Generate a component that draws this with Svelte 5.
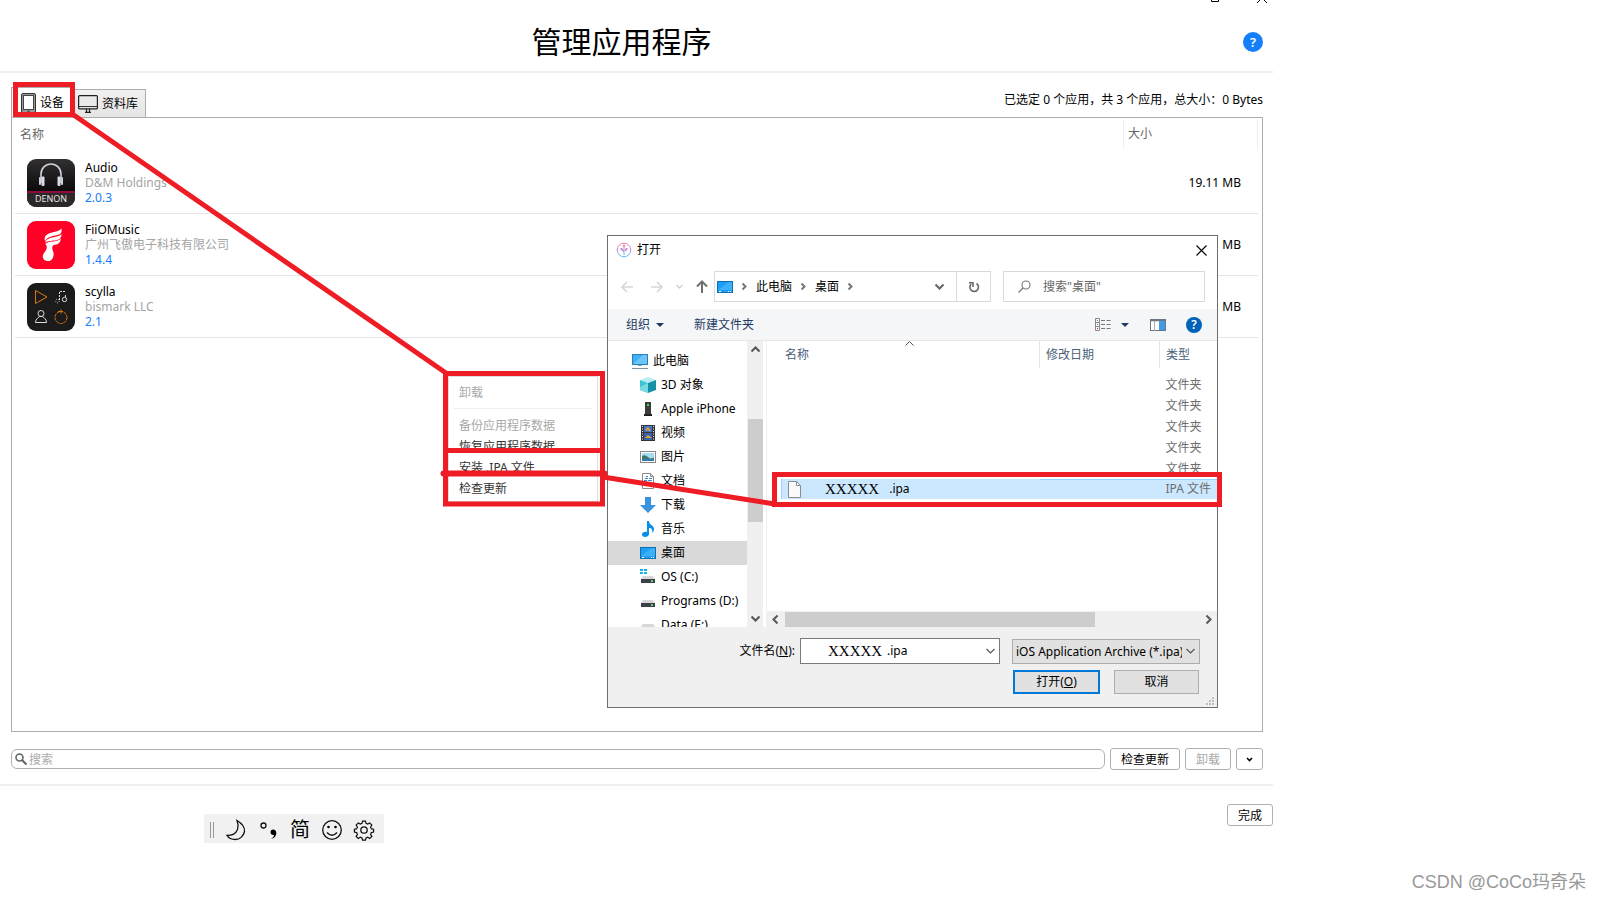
<script>
  const apps = [
    { id: 'denon', name: 'Audio', vendor: 'D&M Holdings', version: '2.0.3', size: '19.11 MB' },
    { id: 'fiio', name: 'FiiOMusic', vendor: '广州飞傲电子科技有限公司', version: '1.4.4', size: 'MB' },
    { id: 'scylla', name: 'scylla', vendor: 'bismark LLC', version: '2.1', size: 'MB' }
  ];
  const tree = [
    { icon: 'pc', label: '此电脑', root: true },
    { icon: 'cube', label: '3D 对象' },
    { icon: 'phone', label: 'Apple iPhone' },
    { icon: 'video', label: '视频' },
    { icon: 'picture', label: '图片' },
    { icon: 'doc', label: '文档' },
    { icon: 'down', label: '下载' },
    { icon: 'music', label: '音乐' },
    { icon: 'desktop', label: '桌面', selected: true },
    { icon: 'osdisk', label: 'OS (C:)' },
    { icon: 'disk', label: 'Programs (D:)' },
    { icon: 'disk', label: 'Data (E:)' }
  ];
  const folders = [1, 2, 3, 4, 5];
  let query = $state('');
  let fileName = $state('XXXXX');
</script>

{#snippet treeIcon(kind)}
  <svg class="i16" viewBox="0 0 16 16" aria-hidden="true">
    {#if kind === 'pc'}
      <rect x=".5" y="1.5" width="15" height="10" fill="#3fb0f5" stroke="#2b7db5" />
      <path d="M1 11 11 2h4v9z" fill="#6cc6fa" />
      <path d="M6 12h4v1H6z" fill="#8aa" /><path d="M0 15.500h16" stroke="#7d93a3" />
    {:else if kind === 'cube'}
      <path d="M8 0 16 3 8 6 0 3z" fill="#b5eef2" /><path d="M0 3l8 3v10l-8-3z" fill="#3cc3d1" /><path d="M16 3 8 6v10l8-3z" fill="#1590a6" /><path d="M0 10l8-4v10l-8-3z" fill="#76dbe3" />
    {:else if kind === 'phone'}
      <path d="M5 1h6v12H5z" fill="#3c3c3c" /><path d="M4 13h8v2H4z" fill="#222" /><rect x="7" y="3" width="2" height="2" fill="#3be04a" />
    {:else if kind === 'video'}
      <path d="M1 0h14v16H1z" fill="#33363b" /><path d="M2.500 1v15M13.500 1v15" stroke="#e6e6e6" stroke-dasharray="1 1.500" /><path d="M4 1h8v6H4z" fill="#4a74c9" /><path d="M4 8h8v7H4z" fill="#3b62ad" /><path d="M5 5l3-3 3 4zM5 13l3-3 4 3z" fill="#e0a52d" />
    {:else if kind === 'picture'}
      <rect x=".5" y="2.500" width="15" height="11" fill="#fff" stroke="#8a8a8a" /><path d="M2 4h12v8H2z" fill="#a8d9f5" /><path d="M2 7q3-2 6 1t6 0v4H2z" fill="#3b7a68" /><path d="M2 10h12v2H2z" fill="#3779ad" />
    {:else if kind === 'doc'}
      <path d="M2.500.5h8l3 3v12h-11z" fill="#fff" stroke="#8a8a8a" /><path d="M10.500.5v3h3" fill="none" stroke="#8a8a8a" /><path d="M6 3.500h2M5 5.500h3M9 5.500h3M4 7.500h3M8 7.500h4M4 9.500h8M4 11.500h8" stroke="#2a8ad4" />
    {:else if kind === 'down'}
      <path d="M5 0h6v8h5l-8 8-8-8h5z" fill="#3a93df" />
    {:else if kind === 'music'}
      <path d="M7 0h2c0 4 5 4 5 8 0 2-1 3-2 4 1-4-1-5-3-5v6c0 2-2 3-4 3s-3-1-3-2.500S4 10 7 11z" fill="#0a8fe8" />
    {:else if kind === 'desktop'}
      <rect x=".5" y="2.500" width="15" height="11" fill="#1e9ff5" stroke="#0f6fb3" /><path d="M1 11 12 3h3v8z" fill="#3db0fa" /><path d="M2 12.500h2M11 12.500h1M13 12.500h1" stroke="#fff" />
    {:else}
      {#if kind === 'osdisk'}<path d="M0 0h3v2H0zM4 0h3v2H4zM0 3h3v2H0zM4 3h3v2H4z" fill="#17b2e8" />{/if}
      <path d="M3 7h10l2 3H1z" fill="#d5d7da" /><path d="M1 10h14v4H1z" fill="#3d4147" /><rect x="11" y="11" width="2" height="2" fill="#49e05a" />
    {/if}
  </svg>
{/snippet}

{#snippet chevron(d, color)}
  <svg class="chev" viewBox="0 0 9 9" aria-hidden="true"><path {d} fill="none" stroke={color} stroke-width="2" /></svg>
{/snippet}

<div class="page">
  <main class="window">
    <header>
      <h1>管理应用程序</h1>
      <button class="help" aria-label="?">?</button>
      <svg class="caption" viewBox="0 0 56 3" aria-hidden="true"><path d="M.5 0v1.500h7V0M46 3l4-4M56 3l-4-4" fill="none" stroke="#000" /></svg>
    </header>

    <section class="body">
      <div class="tabline">
        <div class="tabs" role="tablist">
          <button class="tab active" role="tab" aria-selected="true">
            <svg width="15" height="20" viewBox="0 0 15 20" aria-hidden="true"><rect x=".5" y=".5" width="14" height="19" rx="1.500" fill="#999" stroke="#333" /><rect x="2.500" y="2.500" width="10" height="14" fill="#fff" stroke="#444" /><path d="M6.500 18.200h2" stroke="#222" /></svg>
            设备
          </button>
          <button class="tab" role="tab" aria-selected="false">
            <svg width="20" height="18" viewBox="0 0 20 18" aria-hidden="true"><rect x=".6" y=".6" width="18.800" height="13.300" rx="1" fill="#e9e9e9" stroke="#222" stroke-width="1.200" /><path d="M1 11.500h18" stroke="#333" /><path d="M8.500 14v3M11.500 14v3M7 17.300h6" stroke="#222" stroke-width="1.200" /></svg>
            资料库
          </button>
        </div>
        <p>已选定 0 个应用，共 3 个应用，总大小：0 Bytes</p>
      </div>

      <div class="panel">
        <table class="apps">
          <thead><tr><th>名称</th><th class="size"><span>大小</span></th></tr></thead>
          <tbody>
            {#each apps as app}
              <tr>
                <td>
                  <div class="app">
                    <svg class="appicon" viewBox="0 0 48 48" aria-hidden="true">
                      {#if app.id === 'denon'}
                        <defs><linearGradient id="dk" x1="0" y1="0" x2="0" y2="1"><stop offset="0" stop-color="#322f31" /><stop offset=".65" stop-color="#0d0b0c" /><stop offset="1" stop-color="#2a2426" /></linearGradient></defs>
                        <rect width="48" height="48" rx="9" fill="url(#dk)" />
                        <path d="M0 34h48v5a9 9 0 0 1-9 9H9a9 9 0 0 1-9-9z" fill="#2c2729" />
                        <path d="M0 32h48v2H0z" fill="#8e0b3f" />
                        <path d="M14 24V15a10 10 0 0 1 20 0v9" fill="none" stroke="#cfd0de" stroke-width="1.600" />
                        <rect x="12" y="18" width="2" height="8" rx="1" fill="#cfd0de" /><rect x="14.500" y="17.500" width="3" height="9.500" rx="1" fill="#dcdce8" />
                        <rect x="34" y="18" width="2" height="8" rx="1" fill="#cfd0de" /><rect x="30.500" y="17.500" width="3" height="9.500" rx="1" fill="#dcdce8" />
                        <text x="24" y="43" text-anchor="middle" class="denon">DENON</text>
                      {:else if app.id === 'fiio'}
                        <rect width="48" height="48" rx="9" fill="#ff0027" />
                        <path d="M18 20c-2-6 4-8 9-9 3-.6 6-1.600 7.500-3.500.6 4-.5 5.500-4 6.500-5 1-10.500 2-12.500 6z" fill="#fff" />
                        <path d="M18 21.500c2-5 8-5 12-6 2-.6 3.500-1.500 4.500-2.500 0 4-2 5.500-5 6.200-4 .7-9 .3-11.500 2.300z" fill="#fff" />
                        <path d="M18.300 23c3-3 7-2 11-3 2-.4 3.700-1.500 4.400-2.500 0 4-2.700 6-5.700 6.300-2 .3-3 1-2.700 4l1.200 4c.6 4-1.500 8-5 8.200-3.500.2-6-2-5.700-5 .3-3 3-4.500 3.700-7 .6-2 .2-3.500-1.200-5z" fill="#fff" />
                      {:else}
                        <rect width="48" height="48" rx="9" fill="#1b1b1b" />
                        <path d="M8.500 7.500 20 14 8.500 20.500z" fill="none" stroke="#d8780f" />
                        <path d="M32.500 17V8.500h6M38.500 12v3" fill="none" stroke="#ddd" stroke-dasharray="2 1" /><circle cx="30.500" cy="18" r="1.800" fill="none" stroke="#ddd" stroke-width=".8" stroke-dasharray="1 1" /><circle cx="37.500" cy="16.500" r="2.200" fill="none" stroke="#ddd" />
                        <circle cx="14" cy="30.500" r="3" fill="none" stroke="#ddd" /><path d="M8.500 39.500c0-3 2-4.500 4-6h3c2 1.500 4 3 4 6z" fill="none" stroke="#ddd" />
                        <circle cx="34" cy="34.500" r="6" fill="none" stroke="#d8780f" stroke-dasharray="3 .8" /><path d="M34 26.500v4M31 28.500h5" stroke="#d8780f" />
                      {/if}
                    </svg>
                    <div class="meta"><strong>{app.name}</strong><span>{app.vendor}</span><a href="#{app.id}">{app.version}</a></div>
                  </div>
                </td>
                <td class="size">{app.size}</td>
              </tr>
            {/each}
          </tbody>
        </table>
      </div>

      <div class="actions">
        <label class="search">
          <svg width="12" height="12" viewBox="0 0 12 12" aria-hidden="true"><circle cx="4.500" cy="4.500" r="3.500" fill="none" stroke="#666" stroke-width="1.600" /><path d="m7 7 4.500 4.500" stroke="#666" stroke-width="2.200" /></svg>
          <input type="text" aria-label="搜索" placeholder="搜索" bind:value={query} />
        </label>
        <button class="btn wide">检查更新</button>
        <button class="btn" disabled>卸载</button>
        <button class="btn more" aria-label="更多"><svg width="7" height="5" viewBox="0 0 7 5" aria-hidden="true"><path d="M1 1l2.500 2.500L6 1" fill="none" stroke="#000" stroke-width="1.600" /></svg></button>
      </div>
    </section>

    <footer><button class="btn">完成</button></footer>
  </main>

  <menu class="context">
    <li><button disabled>卸载</button></li>
    <li class="rule"></li>
    <li><button disabled>备份应用程序数据</button></li>
    <li><button>恢复应用程序数据</button></li>
    <li><button>安装 .IPA 文件</button></li>
    <li><button>检查更新</button></li>
  </menu>

  <div class="dialog" role="dialog" aria-labelledby="dlg-title">
    <div class="titlebar">
      <svg width="16" height="16" viewBox="0 0 16 16" aria-hidden="true">
        <defs><linearGradient id="ring" x1="0" y1="0" x2="0" y2="1"><stop offset="0" stop-color="#f57f9b" /><stop offset=".55" stop-color="#b78be0" /><stop offset="1" stop-color="#52c3f2" /></linearGradient></defs>
        <circle cx="8" cy="8" r="6.800" fill="#fff" stroke="url(#ring)" /><path d="M7.500 4h1v9h-1zM4.500 6h2v1.500l1.500 1v1.500L4.500 8zM11.500 6h-2v1.500L8 8.500V10l3.500-2zM6 4.500 8 2.500l2 2z" fill="url(#ring)" />
      </svg>
      <span id="dlg-title">打开</span>
      <button class="bare close" aria-label="关闭"><svg width="11" height="11" viewBox="0 0 11 11"><path d="m.5.5 10 10M10.500.5l-10 10" stroke="#000" stroke-width="1.100" /></svg></button>
    </div>

    <div class="nav">
      <div class="arrows">
        <button class="bare" aria-label="后退"><svg width="12" height="12" viewBox="0 0 12 12"><path d="M12 6H1M6 1 1 6l5 5" fill="none" stroke="#d6d6d6" stroke-width="1.600" /></svg></button>
        <button class="bare" aria-label="前进"><svg width="12" height="12" viewBox="0 0 12 12"><path d="M0 6h11M6 1l5 5-5 5" fill="none" stroke="#d6d6d6" stroke-width="1.600" /></svg></button>
        <button class="bare small" aria-label="最近"><svg width="7" height="5" viewBox="0 0 7 5"><path d="M.5 1l3 3 3-3" fill="none" stroke="#d0d0d0" stroke-width="1.300" /></svg></button>
        <button class="bare" aria-label="上移"><svg width="12" height="13" viewBox="0 0 12 13"><path d="M6 13V2M1 6.500 6 1.500l5 5" fill="none" stroke="#6f6f6f" stroke-width="2" /></svg></button>
      </div>
      <div class="address">
        <div class="crumbs">
          {@render treeIcon('desktop')}
          {@render chevron('M2.500 1.500l3 3-3 3', '#777')}
          <a href="#pc">此电脑</a>
          {@render chevron('M2.500 1.500l3 3-3 3', '#777')}
          <a href="#desktop">桌面</a>
          {@render chevron('M2.500 1.500l3 3-3 3', '#777')}
          <span class="push">{@render chevron('M.5 2.500l4 4 4-4', '#666')}</span>
        </div>
        <button class="bare refresh" aria-label="刷新"><svg width="12" height="12" viewBox="0 0 12 12"><path d="M8.500 2.500A4.300 4.300 0 1 1 3.200 3" fill="none" stroke="#666" stroke-width="1.600" /><path d="M1 1.800H5V6" fill="none" stroke="#666" stroke-width="1.500" /></svg></button>
      </div>
      <label class="find">
        <svg width="13" height="13" viewBox="0 0 13 13" aria-hidden="true"><circle cx="8" cy="5" r="4" fill="none" stroke="#777" stroke-width="1.100" /><path d="M5 8 .5 12.500" stroke="#777" stroke-width="1.200" /></svg>
        <input type="text" placeholder={'搜索"桌面"'} aria-label="搜索桌面" />
      </label>
    </div>

    <div class="toolbar">
      <button class="bare">组织 <svg width="8" height="4" viewBox="0 0 8 4"><path d="M0 0h8L4 4z" fill="#1d3a63" /></svg></button>
      <button class="bare">新建文件夹</button>
      <div class="views">
        <button class="bare" aria-label="视图"><svg width="16" height="13" viewBox="0 0 16 13"><path d="M.5.5h4v12h-4zM.5 4.500h4M.5 8.500h4" fill="none" stroke="#888" /><path d="M6 2.500h4M11.500 2.500h4M6 6.500h4M11.500 6.500h4M6 10.500h4M11.500 10.500h4" stroke="#777" /><path d="M2 2h1v1H2zM2 6h1v1H2z" fill="#3a7" /><path d="M2 10h1v1H2z" fill="#c33" /></svg></button>
        <button class="bare" aria-label="更改视图"><svg width="8" height="4" viewBox="0 0 8 4"><path d="M0 0h8L4 4z" fill="#1d3a63" /></svg></button>
        <button class="bare pane" aria-label="预览"><svg width="16" height="12" viewBox="0 0 16 12"><rect x=".5" y=".5" width="15" height="11" fill="#fff" stroke="#6c7683" /><path d="M1 1.500h14" stroke="#6c7683" stroke-width="1.500" /><path d="M4.500 2v10" stroke="#aab" /><path d="M9 2h6v9H9z" fill="#3f9be8" /></svg></button>
        <button class="help dark" aria-label="?">?</button>
      </div>
    </div>

    <div class="content">
      <ul class="tree">
        {#each tree as node}
          <li class:root={node.root} class:selected={node.selected}>{@render treeIcon(node.icon)}<span>{node.label}</span></li>
        {/each}
      </ul>
      <div class="vscroll">
        {@render chevron('M.5 6.500l4-4 4 4', '#555')}
        <i></i>
        {@render chevron('M.5 2.500l4 4 4-4', '#555')}
      </div>
      <div class="listing">
        <svg class="sort" width="9" height="5" viewBox="0 0 9 5" aria-hidden="true"><path d="M.5 4.500l4-4 4 4" fill="none" stroke="#555" /></svg>
        <table class="files">
          <thead><tr><th>名称</th><th class="date">修改日期</th><th class="type">类型</th></tr></thead>
          <tbody>
            {#each folders as f (f)}
              <tr><td></td><td></td><td>文件夹</td></tr>
            {/each}
            <tr class="selected">
              <td><div class="file"><svg width="13" height="17" viewBox="0 0 13 17" aria-hidden="true"><path d="M.5.5h8l4 4v12H.5z" fill="#fbfbfb" stroke="#8c8c8c" /><path d="M8.500.5v4h4" fill="none" stroke="#8c8c8c" /></svg><span class="serif">XXXXX</span><span>.ipa</span></div></td>
              <td></td>
              <td>IPA 文件</td>
            </tr>
          </tbody>
        </table>
        <div class="hscroll">
          {@render chevron('M6.500 .5l-4 4 4 4', '#555')}
          <i></i>
          {@render chevron('M2.500 .5l4 4-4 4', '#555')}
        </div>
      </div>
    </div>

    <div class="form">
      <label for="fname">文件名(<u>N</u>):</label>
      <div class="combo"><input id="fname" class="serif" type="text" bind:value={fileName} /><span>.ipa</span><svg width="9" height="6" viewBox="0 0 9 6" aria-hidden="true"><path d="M.5 1l4 4 4-4" fill="none" stroke="#555" stroke-width="1.200" /></svg></div>
      <div class="filter">
        <select aria-label="文件类型"><option>iOS Application Archive (*.ipa)</option></select>
        <svg width="9" height="6" viewBox="0 0 9 6" aria-hidden="true"><path d="M.5 1l4 4 4-4" fill="none" stroke="#555" stroke-width="1.200" /></svg>
      </div>
      <div class="buttons">
        <button class="win primary">打开(<u>O</u>)</button>
        <button class="win">取消</button>
      </div>
      <svg class="grip" width="8" height="8" viewBox="0 0 8 8" aria-hidden="true"><path d="M6 0h2v2H6zM3 3h2v2H3zM6 3h2v2H6zM0 6h2v2H0zM3 6h2v2H3zM6 6h2v2H6z" fill="#bdbdbd" /></svg>
    </div>
  </div>

  <div class="ime">
    <svg width="180" height="29" viewBox="0 0 180 29" aria-hidden="true">
      <path d="M6.500 8v16M9.500 8v16" stroke="#999" />
      <g fill="none" stroke="#111" stroke-width="1.300">
        <path d="M33 6.500c5 3 8 7 7.500 11-1 5-5 8-9 8-3.500 0-7-1.500-8.500-4 5 0 9-2 10.500-6 1-3 .8-6-.5-9z" />
        <circle cx="59.500" cy="11.500" r="2.500" />
        <circle cx="128" cy="16" r="9.300" />
        <path d="M123 18.500q5 5.500 10 0" />
        <circle cx="160" cy="16" r="3.200" />
        <path d="M158.300 6.500h3.400l.6 2.500 2 .9 2.300-1.400 2.400 2.400-1.400 2.300.8 2 2.600.7v3.200l-2.600.6-.8 2 1.400 2.300-2.400 2.400-2.300-1.400-2 .9-.6 2.500h-3.400l-.6-2.500-2-.9-2.300 1.400-2.400-2.400 1.400-2.300-.8-2-2.600-.6v-3.200l2.600-.7.8-2-1.400-2.300 2.400-2.400 2.300 1.400 2-.9z" stroke-width="1.400" transform="translate(20.800 1.500) scale(.87)" />
      </g>
      <circle cx="124.500" cy="13" r="1.300" /><circle cx="131.500" cy="13" r="1.300" />
      <path d="M69 15.500c2 0 3.500 1.500 3.300 4-.2 3-2.500 5-5.300 5.500 2-1.200 3-2.500 3-4-2 .3-3.500-1-3.500-2.700s1-2.800 2.500-2.800z" />
    </svg>
    <span>简</span>
  </div>

  <svg class="marks" width="1240" height="520" viewBox="0 0 1240 520" aria-hidden="true">
    <g fill="none" stroke="#ee1c24" stroke-width="5">
      <rect x="15.500" y="84.500" width="57" height="30" />
      <path d="M73 114.500 446 373" />
      <rect x="445.500" y="373.500" width="157" height="130.500" />
      <path d="M445 450.500h158" />
      <path d="M603 477 775 504" />
      <rect x="774.500" y="474.500" width="445" height="30" />
      <path d="M443.500 473.500h161" stroke-width="6" stroke-linecap="round" />
    </g>
  </svg>

  <p class="watermark">CSDN @CoCo玛奇朵</p>
</div>

<style>
  :global(body) { margin: 0; background: #fff; }
  .page, .page :is(button, input, select) { font-family: 'Noto Sans', 'Noto Sans CJK SC', sans-serif; font-size: 12px; color: #000; }
  .page { position: relative; min-height: 100vh; display: grid; grid-template-columns: 1fr 328px; line-height: 16px; overflow: hidden; }
  h1, p, ul, menu { margin: 0; padding: 0; font-weight: 400; list-style: none; }
  svg { display: block; flex: none; }
  a { color: inherit; text-decoration: none; }
  button { padding: 0; line-height: 16px; }
  input { min-width: 0; padding: 0; border: 0; outline: 0; background: none; }
  table { border-collapse: collapse; table-layout: fixed; width: 100%; }
  th { font-weight: 400; text-align: left; padding: 0; }
  td { padding: 0; }
  .bare { border: 0; background: none; display: flex; align-items: center; }
  .i16 { width: 16px; height: 16px; }
  .chev { width: 9px; height: 9px; }
  .serif, .page input.serif { font-family: 'Liberation Serif', serif; font-size: 15px; }

  .window { display: flex; flex-direction: column; }
  header { position: relative; display: grid; grid-template-columns: 1fr auto; align-items: center; height: 71px; border-bottom: 2px solid #eee; padding: 0 10px 0 0; }
  h1 { font-size: 30px; line-height: 40px; text-align: center; padding: 12px 0 0; }
  header .help { margin-top: 13px; }
  .help { width: 20px; height: 20px; border: 0; border-radius: 50%; background: #147efb; }
  .page .help { color: #fff; font-weight: 600; font-size: 13px; }
  .caption { position: absolute; top: 0; right: 6px; width: 56px; height: 3px; }
  .page .help.dark { width: 16px; height: 16px; background: #0063b8; font-size: 12px; line-height: 14px; }

  .body { flex: 1; display: flex; flex-direction: column; padding: 14px 10px 14px 11px; border-bottom: 2px solid #eee; }
  .tabline { display: flex; align-items: flex-end; justify-content: space-between; height: 30px; }
  .tabline p { padding-bottom: 9px; }
  .tabs { display: flex; align-items: flex-end; }
  .tab { display: flex; align-items: center; gap: 4px; height: 28px; padding: 0 7px 0 4px; border: 1px solid #acacac; border-bottom: 0; border-left: 0; background: linear-gradient(#f1f1f1, #e4e4e4); }
  .tab.active { height: 30px; padding: 0 9px; border-left: 1px solid #acacac; background: #fff; }
  .panel { flex: 1; border: 1px solid #acacac; padding: 0 4px 0 3px; }
  .apps th { height: 32px; padding-left: 5px; color: #666; }
  .apps th.size { width: 135px; padding: 2px 0 0; vertical-align: top; }
  .apps th.size span { display: block; border: 1px solid #eee; border-width: 0 1px; padding: 6px 4px; }
  .apps td { height: 61px; border-bottom: 1px solid #e5e5e5; }
  .apps td.size { text-align: right; padding-right: 17px; }
  .app { display: flex; align-items: center; gap: 10px; padding-left: 12px; }
  .appicon { width: 48px; height: 48px; }
  .denon { font: 9px 'Open Sans', sans-serif; fill: #eee; }
  .meta { display: flex; flex-direction: column; line-height: 15px; }
  .meta strong { font-weight: 400; }
  .meta span { color: #a5a5a5; }
  .meta a { color: #147efb; }
  .actions { display: flex; align-items: center; gap: 5px; padding-top: 16px; }
  .search { flex: 1; display: flex; align-items: center; gap: 2px; height: 18px; border: 1px solid #b0b0b0; border-radius: 6px; padding-left: 3px; }
  .search input { flex: 1; }
  .search input::placeholder { color: #aaa; }
  .btn { width: 46px; height: 22px; border: 1px solid #b0b0b0; border-radius: 3px; background: #fff; padding-top: 1px; }
  .btn.wide { width: 70px; }
  .btn.more { width: 27px; display: grid; place-items: center; }
  .page :disabled { color: #a8a8a8; }
  footer { display: flex; justify-content: flex-end; padding: 18px 0 74px; }

  .context { position: absolute; left: 448px; top: 376px; width: 150px; height: 126px; border: 1px solid #ddd; box-sizing: border-box; background: #fff; padding: 5px; }
  .context button { border: 0; background: none; height: 21px; padding: 0 5px; display: block; }
  .context button:not(:disabled) { color: #333; }
  .context .rule { border-bottom: 1px solid #eee; height: 5px; margin-bottom: 6px; }

  .dialog { position: absolute; left: 607px; top: 235px; width: 609px; border: 1px solid #6e6e6e; background: #fff; }
  .titlebar { display: flex; align-items: center; gap: 5px; height: 28px; padding: 0 10px 0 8px; }
  .close { margin-left: auto; }
  .nav { display: flex; align-items: center; gap: 12px; padding: 7px 12px 7px 13px; }
  .arrows { display: flex; align-items: center; gap: 18px; margin-right: -6px; }
  .arrows .small { margin: 0 -5px; }
  .address { flex: 1; display: flex; height: 29px; border: 1px solid #d9d9d9; }
  .crumbs { flex: 1; display: flex; align-items: center; gap: 7px; padding: 0 12px 0 2px; }
  .push { margin-left: auto; }
  .refresh { width: 34px; justify-content: center; border-left: 1px solid #d9d9d9; }
  .find { width: 200px; height: 29px; box-sizing: content-box; border: 1px solid #d9d9d9; display: flex; align-items: center; gap: 12px; }
  .find svg { margin-left: 14px; }
  .find input { flex: 1; }
  .find input::placeholder { color: #666; }
  .toolbar { display: flex; align-items: center; gap: 30px; height: 31px; background: #f5f6f7; border-bottom: 1px solid #e5e6e8; padding: 0 15px 0 18px; }
  .page .toolbar .bare { gap: 6px; color: #1d3a63; }
  .views { margin-left: auto; display: flex; align-items: center; gap: 10px; }
  .views .pane { margin: 0 10px 0 11px; }
  .content { display: grid; grid-template-columns: 139px 16px 1fr; height: 286px; }
  .tree { overflow: hidden; padding-top: 8px; height: 278px; }
  .tree li { display: flex; align-items: center; gap: 5px; height: 24px; padding-left: 32px; white-space: nowrap; }
  .tree li.root { padding-left: 24px; }
  .tree li.selected { background: #d9d9d9; }
  .vscroll { display: flex; flex-direction: column; align-items: center; background: #f0f0f0; padding: 4px 0; }
  .vscroll i { width: 15px; height: 103px; margin: 65px 0 auto; background: #cdcdcd; }
  .listing { position: relative; display: flex; flex-direction: column; border-left: 1px solid #f0f0f0; margin-left: 3px; }
  .sort { position: absolute; left: 138px; top: 0; }
  .files th { height: 27px; color: #4c607a; padding-left: 18px; }
  .files .date { width: 113px; padding-left: 6px; border-left: 1px solid #e5e5e5; }
  .files .type { width: 51px; padding-left: 6px; border-left: 1px solid #e5e5e5; }
  .files tbody::before { content: ''; display: block; height: 6px; }
  .files td { height: 21px; color: #6d6d6d; white-space: nowrap; }
  .files td:last-child { padding-left: 6px; }
  .files .selected td { height: 20px; border: 0; background: linear-gradient(#99d1ff 0 1px, #cce8ff 1px 20px, #99d1ff 20px); }
  .files .selected td:first-child { background: linear-gradient(90deg, #fff 14px, #99d1ff 14px 15px, #cce8ff 15px); }
  .file { display: flex; align-items: center; padding-left: 21px; color: #000; }
  .file .serif { padding: 0 10px 0 24px; }
  .hscroll { margin-top: auto; display: flex; align-items: center; height: 16px; background: #f0f0f0; padding: 0 4px; }
  .hscroll i { width: 310px; height: 15px; margin: 0 auto 0 5px; background: #cdcdcd; }
  .form { position: relative; display: grid; grid-template-columns: auto 200px 188px; justify-content: end; align-items: center; column-gap: 12px; row-gap: 6px; background: #f0f0f0; padding: 11px 17px 13px 0; }
  .form label { margin-right: -7px; }
  .combo { box-sizing: border-box; height: 26px; border: 1px solid #7a7a7a; background: #fff; display: flex; align-items: center; padding: 0 4px 0 27px; }
  .combo input { width: 59px; }
  .combo svg { margin-left: auto; }
  .filter { display: grid; align-items: center; height: 25px; box-sizing: border-box; border: 1px solid #adadad; background: #e1e1e1; }
  .filter > * { grid-area: 1 / 1; }
  .filter svg { justify-self: end; margin-right: 4px; pointer-events: none; }
  .filter select { appearance: none; width: 169px; border: 0; background: none; padding: 0 0 0 3px; overflow: hidden; text-overflow: clip; }
  .buttons { grid-column: 3; display: flex; gap: 14px; padding: 0 1px; }
  .win { flex: 1; height: 24px; border: 1px solid #adadad; background: #e1e1e1; }
  .win.primary { border: 2px solid #0078d7; }
  .grip { position: absolute; right: 3px; bottom: 2px; }

  .ime { position: absolute; left: 204px; top: 814px; background: #f1f1f1; }
  .ime span { position: absolute; left: 86px; top: 2px; font-size: 20px; line-height: 28px; }
  .marks { position: absolute; left: 0; top: 0; pointer-events: none; }
  .watermark { position: absolute; right: 15px; bottom: 5px; font: 18px/26px 'Liberation Sans', 'Noto Sans CJK SC', sans-serif; color: #999; }
</style>
